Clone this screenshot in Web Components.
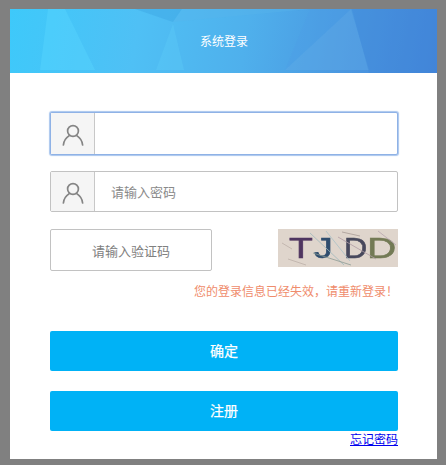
<!DOCTYPE html>
<html lang="zh">
<head>
<meta charset="utf-8">
<title>系统登录</title>
<style>
  html, body { margin: 0; height: 100%; }
  body {
    background: #808080;
    font-family: "Liberation Sans", "Noto Sans CJK SC", sans-serif;
    overflow: hidden;
  }
</style>
</head>
<body>
<login-card>
  <span slot="title">系统登录</span>
  <login-field icon focused></login-field>
  <login-field icon hint="请输入密码"></login-field>
  <captcha-row hint="请输入验证码" code="TJDD"></captcha-row>
  <login-message>您的登录信息已经失效，请重新登录！</login-message>
  <login-button>确定</login-button>
  <login-button>注册</login-button>
  <login-link>忘记密码</login-link>
</login-card>

<script>
class LoginCard extends HTMLElement {
  constructor() {
    super();
    this.attachShadow({ mode: 'open' });
    this.shadowRoot.innerHTML = `
      <style>
        :host {
          display: block;
          width: 427px;
          height: 450px;
          margin: 9px 0 0 10px;
          background: #fff;
        }
        header {
          position: relative;
          height: 64px;
          display: flex;
          align-items: center;
          justify-content: center;
          background: linear-gradient(100deg, #3ec9fa 0%, #4fc0f5 30%, #4fb0ec 55%, #4b9be2 75%, #4585d9 100%);
          overflow: hidden;
        }
        svg {
          position: absolute;
          inset: 0;
          width: 100%;
          height: 100%;
        }
        .title {
          position: relative;
          color: #fff;
          font-size: 12px;
          left: 0.5px;
          top: -0.5px;
        }
        main {
          display: flex;
          flex-direction: column;
          padding: 39px 39px 0 40px;
        }
      </style>
      <header>
        <!-- Low-poly backdrop -->
        <svg viewBox="0 0 427 64" preserveAspectRatio="none">
          <polygon points="38,0 55,0 85,61 30,61" fill="#5ad6ff" fill-opacity="0.4"/>
          <polygon points="125,0 163,13 172,0" fill="#3aa2e2" fill-opacity="0.4"/>
          <polygon points="163,15 174,61 146,61" fill="#5ccaf8" fill-opacity="0.4"/>
          <polygon points="172,0 300,0 163,13" fill="#58b4ea" fill-opacity="0.35"/>
          <polygon points="341,0 359,61 275,61" fill="#62aae6" fill-opacity="0.4"/>
          <polygon points="342,0 427,0 427,64 359,64" fill="#3d86d8" fill-opacity="0.3"/>
          <polygon points="300,0 341,0 275,61" fill="#4d9fe4" fill-opacity="0.35"/>
        </svg>
        <span class="title"><slot name="title"></slot></span>
      </header>
      <main><slot></slot></main>
    `;
  }
}

const USER_ICON = `
  <svg width="24" height="24" viewBox="0 0 24 24" fill="none" stroke="#858585" stroke-width="1.7" stroke-linecap="round">
    <circle cx="12" cy="9" r="5.4"/>
    <path d="M2.4 23c.3-4.4 2.8-7.4 6.2-9.6M21.6 23c-.3-4.4-2.8-7.4-6.2-9.6"/>
  </svg>`;

class LoginField extends HTMLElement {
  constructor() {
    super();
    this.attachShadow({ mode: 'open' });
  }

  connectedCallback() {
    const hint = this.getAttribute('hint') || '';
    const icon = this.hasAttribute('icon') ? `<div class="addon">${USER_ICON}</div>` : '';
    this.shadowRoot.innerHTML = `
      <style>
        :host {
          display: flex;
          box-sizing: border-box;
          width: 348px;
          height: 41px;
          margin-bottom: 17px;
          background: #fff;
          border: 1px solid #c2c2c2;
          border-radius: 2px;
          color: #8a8a8a;
          font-size: 13px;
        }
        :host([focused]) {
          height: 43px;
          margin-bottom: 16px;
          border-color: #8fb2e6;
          box-shadow: 0 0 1px 1px #a9c6ee;
        }
        .addon {
          display: flex;
          align-items: center;
          justify-content: center;
          width: 43px;
          background: #f5f5f5;
          border-right: 1px solid #c8c8c8;
        }
        .hint {
          display: flex;
          align-items: center;
          padding-left: 16px;
        }
      </style>
      ${icon}
      <div class="hint">${hint}</div>
    `;
  }
}

class CaptchaRow extends HTMLElement {
  constructor() {
    super();
    this.attachShadow({ mode: 'open' });
  }

  connectedCallback() {
    const code = this.getAttribute('code');
    this.shadowRoot.innerHTML = `
      <style>
        :host {
          display: flex;
          justify-content: space-between;
          align-items: flex-start;
          width: 348px;
        }
        .input {
          box-sizing: border-box;
          width: 162px;
          height: 42px;
          display: flex;
          align-items: center;
          justify-content: center;
          border: 1px solid #c2c2c2;
          border-radius: 2px;
          color: #808080;
          font-size: 13px;
        }
        .code {
          position: relative;
          box-sizing: border-box;
          width: 120px;
          height: 38px;
          padding-left: 11px;
          display: flex;
          align-items: center;
          background: #dfd5cc;
          overflow: hidden;
          font: 30px "Liberation Sans", sans-serif;
          -webkit-text-stroke: 0.6px currentColor;
          filter: blur(0.6px);
        }
        .code span { display: block; line-height: 38px; transform-origin: left center; }
        .c0 { color: #4f3560; width: 25px; transform: scaleX(1.3); }
        .c1 { color: #2f4d6e; width: 30px; transform: scaleX(1.25); }
        .c2 { color: #47485c; width: 23px; transform: scaleX(1.07); }
        .c3 { color: #737a55; width: 30px; transform: scaleX(1.35); }
        svg { position: absolute; inset: 0; }
      </style>
      <div class="input">${this.getAttribute('hint')}</div>
      <div class="code">
        <span class="c0">${code[0]}</span><span class="c1">${code[1]}</span><span class="c2">${code[2]}</span><span class="c3">${code[3]}</span>
        <!-- Noise lines -->
        <svg width="120" height="38" fill="none" stroke-width="0.8">
          <path d="M32 4l34 32" stroke="#9fb9bd"/>
          <path d="M35 24l38 12" stroke="#8d9c94"/>
          <path d="M48 2l24 30" stroke="#a9c2c8"/>
          <path d="M60 8l38 22" stroke="#b09ca5"/>
          <path d="M100 2l18 14" stroke="#b7a6ae"/>
          <path d="M4 14l10 6" stroke="#bdb0a8"/>
          <path d="M10 30l18 6" stroke="#bdb0a8"/>
          <path d="M64 3l18 4" stroke="#a89c96"/>
        </svg>
      </div>
    `;
  }
}

class LoginMessage extends HTMLElement {
  constructor() {
    super();
    this.attachShadow({ mode: 'open' });
    this.shadowRoot.innerHTML = `
      <style>
        :host {
          display: block;
          margin-top: 12px;
          margin-bottom: 30px;
          height: 18px;
          line-height: 18px;
          text-align: right;
          color: #ef8c6c;
          font-size: 12px;
        }
      </style>
      <slot></slot>
    `;
  }
}

class LoginButton extends HTMLElement {
  constructor() {
    super();
    this.attachShadow({ mode: 'open' });
    this.shadowRoot.innerHTML = `
      <style>
        :host {
          display: flex;
          align-items: center;
          justify-content: center;
          width: 348px;
          height: 40px;
          margin-bottom: 20px;
          background: #00b2f6;
          border-radius: 2px;
          color: #fff;
          font-size: 14px;
          -webkit-text-stroke: 0.25px #fff;
        }
        span { position: relative; top: -1px; }
      </style>
      <span><slot></slot></span>
    `;
  }
}

class LoginLink extends HTMLElement {
  constructor() {
    super();
    this.attachShadow({ mode: 'open' });
    this.shadowRoot.innerHTML = `
      <style>
        :host {
          display: block;
          margin-top: -18px;
          width: 348px;
          text-align: right;
          font-size: 12px;
          line-height: 14px;
        }
        a { color: #0000ee; text-decoration: underline; }
      </style>
      <a href="#"><slot></slot></a>
    `;
  }
}

customElements.define('login-card', LoginCard);
customElements.define('login-field', LoginField);
customElements.define('captcha-row', CaptchaRow);
customElements.define('login-message', LoginMessage);
customElements.define('login-button', LoginButton);
customElements.define('login-link', LoginLink);
</script>
</body>
</html>
